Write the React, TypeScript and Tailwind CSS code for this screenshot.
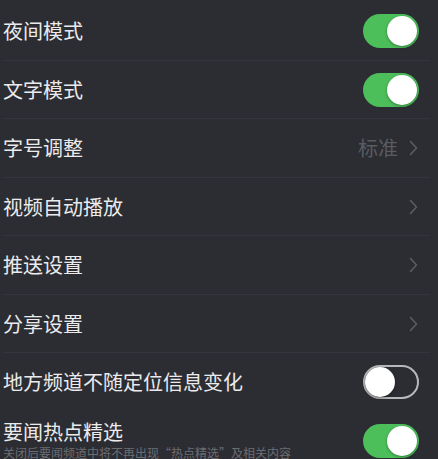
import React from "react";

const font = { fontFamily: '"Noto Sans CJK SC", "Noto Sans", sans-serif' };

function Toggle({ on }: { on: boolean }) {
  if (on) {
    return (
      <div className="relative w-[56px] h-[34px] rounded-full bg-[#4cbf5a] shrink-0">
        <div className="absolute right-[2px] top-[2px] w-[30px] h-[30px] rounded-full bg-white shadow-[0_1px_3px_rgba(0,0,0,0.35)]" />
      </div>
    );
  }
  return (
    <div className="relative w-[56px] h-[34px] rounded-full border-[2px] border-[#b8b8bc] bg-[#2c2d32] shrink-0">
      <div className="absolute left-[0px] top-[0px] w-[30px] h-[30px] rounded-full bg-white shadow-[0_1px_3px_rgba(0,0,0,0.4)]" />
    </div>
  );
}

function Chevron() {
  return (
    <svg width="9" height="16" viewBox="0 0 9 16" className="shrink-0">
      <path d="M1.5 1.5 L7.5 8 L1.5 14.5" fill="none" stroke="#5c5d63" strokeWidth="1.6" strokeLinecap="round" strokeLinejoin="round" />
    </svg>
  );
}

function Row({ children, divider = true }: { children: React.ReactNode; divider?: boolean }) {
  return (
    <div className="relative h-[58.5px] flex items-center justify-between pl-[3px]">
      {children}
      {divider && <div className="absolute left-[3px] right-[8px] bottom-0 h-px bg-[#34353d]" />}
    </div>
  );
}

export default function App() {
  return (
    <div className="w-[438px] h-[459px] overflow-hidden bg-[#2c2d32] pt-[2px] text-[#ebebed]" style={font}>
      <Row>
        <span className="text-[20px] leading-[24px]">夜间模式</span>
        <div className="pr-[19px]"><Toggle on /></div>
      </Row>
      <Row>
        <span className="text-[20px] leading-[24px]">文字模式</span>
        <div className="pr-[19px]"><Toggle on /></div>
      </Row>
      <Row>
        <span className="text-[20px] leading-[24px]">字号调整</span>
        <div className="pr-[20px] flex items-center gap-[11px]">
          <span className="text-[20px] leading-[24px] text-[#5a5b61]">标准</span>
          <Chevron />
        </div>
      </Row>
      <Row>
        <span className="text-[20px] leading-[24px]">视频自动播放</span>
        <div className="pr-[20px]"><Chevron /></div>
      </Row>
      <Row>
        <span className="text-[20px] leading-[24px]">推送设置</span>
        <div className="pr-[20px]"><Chevron /></div>
      </Row>
      <Row>
        <span className="text-[20px] leading-[24px]">分享设置</span>
        <div className="pr-[20px]"><Chevron /></div>
      </Row>
      <Row divider={false}>
        <span className="text-[20px] leading-[24px]">地方频道不随定位信息变化</span>
        <div className="pr-[19px]"><Toggle on={false} /></div>
      </Row>
      <div className="flex items-start justify-between pl-[3px] pt-[7px]">
        <div className="flex flex-col">
          <span className="text-[20px] leading-[26px]">要闻热点精选</span>
          <span className="text-[12px] leading-[15px] text-[#6b6c72]">关闭后要闻频道中将不再出现“热点精选”及相关内容</span>
        </div>
        <div className="pr-[19px] mt-[5px]"><Toggle on /></div>
      </div>
    </div>
  );
}
